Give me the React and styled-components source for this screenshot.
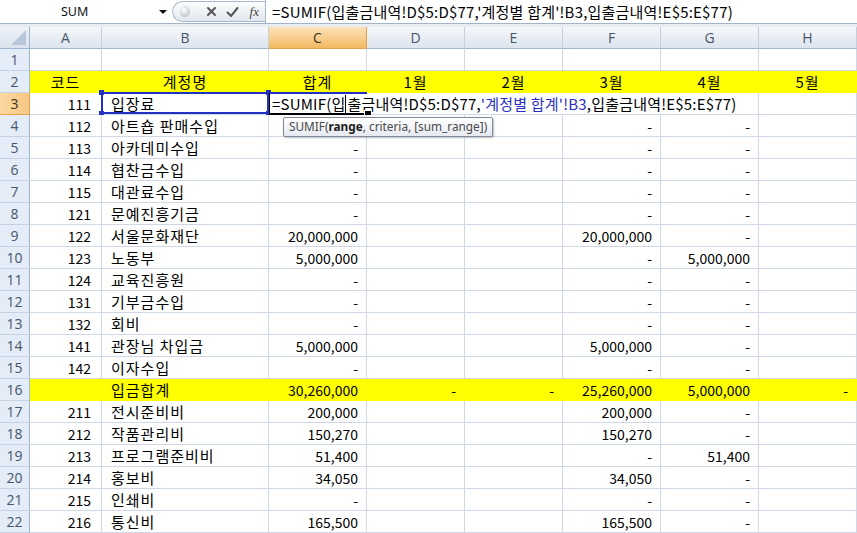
import styled, { createGlobalStyle } from 'styled-components';

const GlobalStyle = createGlobalStyle`
  html, body {
    margin: 0;
    padding: 0;
    background: #ffffff;
    overflow: hidden;
  }
`;

const COLS = ['A', 'B', 'C', 'D', 'E', 'F', 'G', 'H'];
const FORMULA_HEAD = "=SUMIF(입";
const FORMULA_MID = "출금내역!D$5:D$77,";
const FORMULA_REF = "'계정별 합계'!B3";
const FORMULA_TAIL = ",입출금내역!E$5:E$77)";

// code, name, 합계, D, E, F, G, H
const rows = [
  [4, '112', '아트숍 판매수입', '', '', '', '-', '-', ''],
  [5, '113', '아카데미수입', '-', '', '', '-', '-', ''],
  [6, '114', '협찬금수입', '-', '', '', '-', '-', ''],
  [7, '115', '대관료수입', '-', '', '', '-', '-', ''],
  [8, '121', '문예진흥기금', '-', '', '', '-', '-', ''],
  [9, '122', '서울문화재단', '20,000,000', '', '', '20,000,000', '-', ''],
  [10, '123', '노동부', '5,000,000', '', '', '-', '5,000,000', ''],
  [11, '124', '교육진흥원', '-', '', '', '-', '-', ''],
  [12, '131', '기부금수입', '-', '', '', '-', '-', ''],
  [13, '132', '회비', '-', '', '', '-', '-', ''],
  [14, '141', '관장님 차입금', '5,000,000', '', '', '5,000,000', '-', ''],
  [15, '142', '이자수입', '-', '', '', '-', '-', ''],
  [16, '', '입금합계', '30,260,000', '-', '-', '25,260,000', '5,000,000', '-', true],
  [17, '211', '전시준비비', '200,000', '', '', '200,000', '-', ''],
  [18, '212', '작품관리비', '150,270', '', '', '150,270', '-', ''],
  [19, '213', '프로그램준비비', '51,400', '', '', '-', '51,400', ''],
  [20, '214', '홍보비', '34,050', '', '', '34,050', '-', ''],
  [21, '215', '인쇄비', '-', '', '', '-', '-', ''],
  [22, '216', '통신비', '165,500', '', '', '165,500', '-', ''],
];

const Window = styled.div`
  width: 857px;
  height: 533px;
  overflow: hidden;
  background: #ffffff;
  font-family: "Noto Sans CJK KR", "Noto Sans", sans-serif;
`;

const FormulaBar = styled.div`
  display: flex;
  height: 23px;
  border-bottom: 1px solid #a3b3c8;
  background: #ffffff;
`;

const NameBox = styled.div`
  width: 172px;
  display: flex;
  align-items: center;
  position: relative;
  font-family: "Noto Sans", sans-serif;
  font-size: 12.5px;
  color: #111;
  padding-left: 61px;
  box-sizing: border-box;
`;

const DropArrow = styled.span`
  position: absolute;
  left: 159px;
  top: 10px;
  width: 0;
  height: 0;
  border-left: 4px solid transparent;
  border-right: 4px solid transparent;
  border-top: 4px solid #111;
`;

const Capsule = styled.div`
  width: 93px;
  margin: 1px 0;
  display: flex;
  align-items: center;
  border: 1px solid #aab7c9;
  border-right: none;
  border-radius: 11px 0 0 11px;
  background: linear-gradient(#fbfcfd, #e3e8ef);
  box-sizing: border-box;
`;

const Ball = styled.span`
  width: 11px;
  height: 11px;
  margin-left: 7px;
  margin-right: 10px;
  border-radius: 50%;
  background: radial-gradient(circle at 40% 35%, #ffffff, #c3c9d1 70%, #a9b0ba);
`;

const IconSlot = styled.span`
  width: 23px;
  display: flex;
  justify-content: center;
  align-items: center;
  color: #555;
`;

const Fx = styled.span`
  font-family: "Liberation Serif", serif;
  font-style: italic;
  font-size: 13px;
  color: #444;
`;

const FormulaText = styled.div`
  flex: 1;
  border-left: 1px solid #aab7c9;
  display: flex;
  align-items: center;
  padding-left: 6px;
  font-size: 15px;
  letter-spacing: 0.2px;
  color: #000;
  white-space: nowrap;
`;

const Strip = styled.div`
  height: 3px;
  background: #e8edf4;
`;

const Sheet = styled.div`
  display: grid;
  grid-template-columns: 30px 72px 167px repeat(6, 98px);
  grid-auto-rows: 22px;
  position: relative;
`;

const Corner = styled.div`
  background: linear-gradient(#eef2f8, #dbe3ee);
  border-right: 1px solid #9eb6ce;
  border-bottom: 1px solid #9eb6ce;
  box-sizing: border-box;
  position: relative;
  &::after {
    content: '';
    position: absolute;
    right: 3px;
    bottom: 3px;
    border-left: 15px solid transparent;
    border-bottom: 15px solid #b9c7d8;
  }
`;

const ColHead = styled.div`
  display: flex;
  align-items: center;
  justify-content: center;
  font-family: "Open Sans", sans-serif;
  font-size: 14px;
  color: ${p => (p.$active ? '#3a3320' : '#46556b')};
  background: ${p =>
    p.$active
      ? 'linear-gradient(#fbe2b8, #f8cd8b 55%, #f3b760)'
      : 'linear-gradient(#f6f8fb, #e8edf4 55%, #dde4ee)'};
  border-right: 1px solid ${p => (p.$active ? '#e0a04e' : '#c3cfdd')};
  border-bottom: 1px solid ${p => (p.$active ? '#e3a24c' : '#9eb6ce')};
  box-sizing: border-box;
`;

const RowHead = styled.div`
  display: flex;
  align-items: center;
  justify-content: center;
  font-family: "Open Sans", sans-serif;
  font-size: 14px;
  color: ${p => (p.$active ? '#3a3320' : '#46556b')};
  background: ${p => (p.$active ? 'linear-gradient(90deg, #fbd9a2, #f7c784)' : '#e4ecf7')};
  border-right: 1px solid ${p => (p.$active ? '#e3a24c' : '#9eb6ce')};
  border-bottom: 1px solid ${p => (p.$active ? '#e3a24c' : '#c5d2e3')};
  box-sizing: border-box;
`;

const Cell = styled.div`
  display: flex;
  align-items: center;
  justify-content: ${p => (p.$align === 'center' ? 'center' : p.$align === 'left' ? 'flex-start' : 'flex-end')};
  padding: ${p => (p.$align === 'left' ? '0 0 0 9px' : p.$align === 'center' ? '0' : `0 ${p.$pad || 8}px 0 0`)};
  font-size: 14px;
  color: #000;
  white-space: nowrap;
  background: ${p => (p.$fill ? '#ffff00' : '#ffffff')};
  border-right: 1px solid ${p => (p.$fill ? '#ffff00' : '#d0d7e5')};
  border-bottom: 1px solid ${p => (p.$fill ? '#ffff00' : '#d0d7e5')};
  box-sizing: border-box;
  position: relative;
  line-height: 1;
`;

const Label = styled.span`
  font-size: 15px;
  letter-spacing: 1px;
`;

const RefBox = styled.div`
  position: absolute;
  left: -1px;
  top: -1px;
  right: -1px;
  bottom: 0;
  border: 2px solid #2233c4;
  pointer-events: none;
`;

const Handle = styled.span`
  position: absolute;
  width: 5px;
  height: 5px;
  background: #2233c4;
  ${p => (p.$top ? 'top: -4px;' : 'bottom: -4px;')}
  ${p => (p.$left ? 'left: -4px;' : 'right: -4px;')}
`;

const EditCell = styled.div`
  grid-column: span 5;
  position: relative;
  display: flex;
  align-items: center;
  padding-left: 3px;
  font-size: 15px;
  letter-spacing: 0.2px;
  color: #000;
  white-space: nowrap;
  background: #ffffff;
  border-bottom: 1px solid #d0d7e5;
  border-right: 1px solid #d0d7e5;
  box-sizing: border-box;
  line-height: 1;
`;

const ActiveFrame = styled.div`
  position: absolute;
  left: 0;
  top: -1px;
  width: 98px;
  bottom: -1px;
  border-top: 2px solid #2233c4;
  border-left: 1px solid #000;
  border-bottom: 2px solid #000;
  box-sizing: border-box;
  pointer-events: none;
`;

const FillHandle = styled.span`
  position: absolute;
  left: 95px;
  bottom: -4px;
  width: 6px;
  height: 6px;
  background: #000;
  border: 1px solid #fff;
`;

const Caret = styled.span`
  display: inline-block;
  width: 1px;
  height: 18px;
  background: #000;
  margin: 0 1px 0 0;
`;

const RefText = styled.span`
  color: #2b2fc4;
`;

const Tip = styled.div`
  position: absolute;
  left: 14px;
  top: 24px;
  height: 18px;
  padding: 0 5px;
  display: flex;
  align-items: center;
  font-family: "Noto Sans", sans-serif;
  font-size: 11.8px;
  letter-spacing: 0;
  color: #4a4a4a;
  border: 1px solid #7f8a99;
  border-radius: 2px;
  background: linear-gradient(#ffffff, #e6e9f1);
  box-shadow: 1px 1px 2px rgba(0, 0, 0, 0.25);
  z-index: 2;
  b {
    color: #222;
    font-weight: 700;
  }
`;

const CrossIcon = () => (
  <svg width="11" height="11" viewBox="0 0 11 11">
    <path d="M2 2 L9 9 M9 2 L2 9" stroke="#555" strokeWidth="2" strokeLinecap="round" />
  </svg>
);

const CheckIcon = () => (
  <svg width="13" height="12" viewBox="0 0 13 12">
    <path d="M1.5 6.5 L5 10 L11.5 2" stroke="#555" strokeWidth="2" fill="none" strokeLinecap="round" strokeLinejoin="round" />
  </svg>
);

const DataRow = ({ r }) => {
  const [num, code, name, sum, d, e, f, g, h, fill] = r;
  return (
    <>
      <RowHead>{num}</RowHead>
      <Cell $fill={fill} $pad={10}>{code}</Cell>
      <Cell $fill={fill} $align="left"><Label>{name}</Label></Cell>
      <Cell $fill={fill}>{sum}</Cell>
      <Cell $fill={fill}>{d}</Cell>
      <Cell $fill={fill}>{e}</Cell>
      <Cell $fill={fill}>{f}</Cell>
      <Cell $fill={fill}>{g}</Cell>
      <Cell $fill={fill}>{h}</Cell>
    </>
  );
};

const HEADINGS = ['코드', '계정명', '합계', '1월', '2월', '3월', '4월', '5월'];

const App = () => {
  return (
    <Window>
      <GlobalStyle />
      <FormulaBar>
        <NameBox>
          SUM
          <DropArrow />
        </NameBox>
        <Capsule>
          <Ball />
          <IconSlot><CrossIcon /></IconSlot>
          <IconSlot><CheckIcon /></IconSlot>
          <IconSlot><Fx>fx</Fx></IconSlot>
        </Capsule>
        <FormulaText>{FORMULA_HEAD + FORMULA_MID + FORMULA_REF + FORMULA_TAIL}</FormulaText>
      </FormulaBar>
      <Strip />
      <Sheet>
        <Corner />
        {COLS.map(c => (
          <ColHead key={c} $active={c === 'C'}>{c}</ColHead>
        ))}

        <RowHead>1</RowHead>
        {COLS.map(c => <Cell key={c} />)}

        <RowHead>2</RowHead>
        {HEADINGS.map(t => (
          <Cell key={t} $fill $align="center"><Label>{t}</Label></Cell>
        ))}

        <RowHead $active>3</RowHead>
        <Cell $pad={10}>111</Cell>
        <Cell $align="left">
          <Label>입장료</Label>
          <RefBox>
            <Handle $top $left />
            <Handle $top />
            <Handle $left />
            <Handle />
          </RefBox>
        </Cell>
        <EditCell>
          {FORMULA_HEAD}
          <Caret />
          {FORMULA_MID}
          <RefText>{FORMULA_REF}</RefText>
          {FORMULA_TAIL}
          <ActiveFrame />
          <FillHandle />
          <Tip>
            SUMIF(<b>range</b>, criteria, [sum_range])
          </Tip>
        </EditCell>
        <Cell />

        {rows.map(r => <DataRow key={r[0]} r={r} />)}
      </Sheet>
    </Window>
  );
};

export default App;
